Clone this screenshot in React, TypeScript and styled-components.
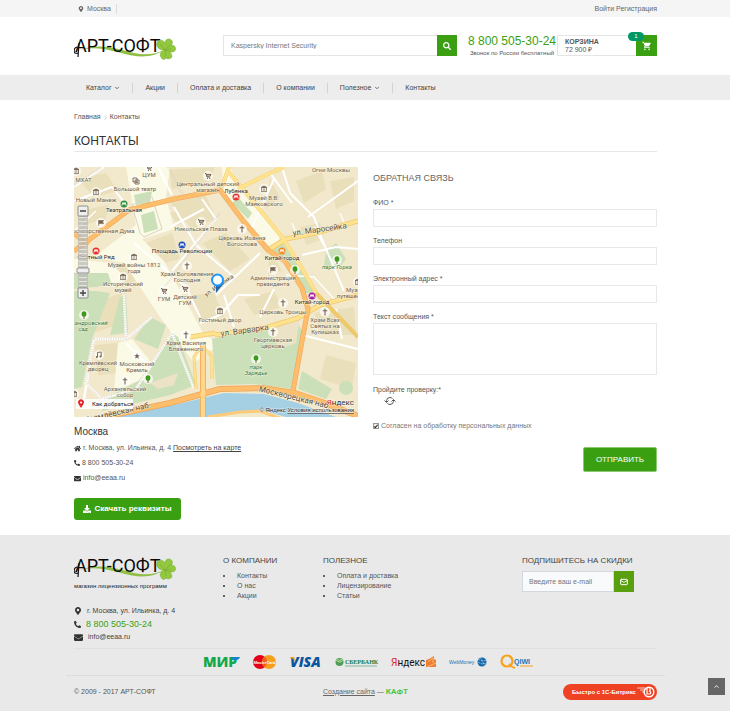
import React from "react";
import styled, { createGlobalStyle, css } from "styled-components";
import {
  FaDownload,
  FaEnvelope,
  FaHome,
  FaMapMarkerAlt,
  FaPhoneAlt,
  FaSearch,
} from "react-icons/fa";
import { MdShoppingCart } from "react-icons/md";
import { ChevronDown, ChevronRight, ChevronUp, Mail } from "lucide-react";

const GREEN = "#3aa012";

const Global = createGlobalStyle`
  *, *::before, *::after { box-sizing: border-box; }
  body {
    margin: 0;
    background: #fff;
    color: #555;
    font-family: "Liberation Sans", Arial, sans-serif;
    font-size: 7px;
    line-height: 10px;
  }
  a { color: inherit; text-decoration: none; }
  h1, h2, h3, p, ul { margin: 0; padding: 0; font-weight: 400; }
  button, input, textarea { font: inherit; color: inherit; border-radius: 0; }
  svg { display: block; flex: none; }
`;

const container = css`
  padding: 0 73px 0 74px;
`;

const TopBar = styled.div`
  ${container}
  display: flex;
  align-items: center;
  justify-content: space-between;
  height: 17px;
  background: #f5f5f5;
  color: #666;
`;

const City = styled.a`
  display: flex;
  align-items: center;
  gap: 3px;
  padding: 0 5px 0 4px;
  border-right: 1px solid #ddd;
`;

const AuthLinks = styled.div`
  display: flex;
  gap: 2px;
`;

const Header = styled.header`
  ${container}
  display: flex;
  align-items: flex-start;
  height: 58px;
  padding-top: 18px;
`;

const LogoLink = styled.a`
  flex: 0 0 149px;
  margin-top: -2px;
`;

const Search = styled.form`
  display: flex;
  flex: 1;
  height: 21px;
`;

const SearchInput = styled.input`
  flex: 1;
  min-width: 0;
  padding: 0 7px;
  border: 1px solid #e5e5e5;
  border-right: 0;
  background: #fff;
  outline: 0;
  &::placeholder { color: #777; opacity: 1; }
`;

const SquareButton = styled.button<{ $bg?: string }>`
  display: flex;
  flex: 0 0 20px;
  align-items: center;
  justify-content: center;
  padding: 0;
  border: 0;
  background: ${(p) => p.$bg || GREEN};
  color: #fff;
  cursor: pointer;
`;

const PhoneBlock = styled.div`
  flex: 0 0 90px;
  margin-left: 10px;
  text-align: center;
`;

const HeaderPhone = styled.a`
  display: block;
  color: ${GREEN};
  font-size: 12px;
  line-height: 13px;
  white-space: nowrap;
`;

const PhoneNote = styled.p`
  font-size: 6px;
  line-height: 10px;
  white-space: nowrap;
`;

const Cart = styled.div`
  position: relative;
  display: flex;
  flex: 0 0 100px;
  height: 21px;
  border: 1px solid #e5e5e5;
  border-right: 0;
`;

const CartInfo = styled.div`
  flex: 1;
  padding: 2px 7px;
  line-height: 8px;
`;

const CartButton = styled(SquareButton)`
  flex-basis: 21px;
  margin: -1px 0;
`;

const CartBadge = styled.span`
  position: absolute;
  top: -4px;
  right: 13px;
  width: 16px;
  height: 9px;
  border-radius: 5px;
  background: #009966;
  color: #fff;
  font-size: 6px;
  line-height: 9px;
  text-align: center;
`;

const Nav = styled.nav`
  ${container}
  display: flex;
  align-items: center;
  height: 25px;
  background: #ededed;
  color: #444;
`;

const NavLink = styled.a`
  display: flex;
  align-items: center;
  gap: 3px;
  padding: 0 12px;
  border-right: 1px solid #d2d2d2;
  &:last-child { border: 0; }
`;

const Main = styled.main`
  ${container}
  padding-top: 12px;
  padding-bottom: 15px;
`;

const Crumbs = styled.nav`
  display: flex;
  align-items: center;
  gap: 1px;
`;

const Title = styled.h1`
  margin-top: 11px;
  padding-bottom: 2px;
  border-bottom: 1px solid #e8e8e8;
  color: #333;
  font-size: 12px;
  line-height: 16px;
`;

const Columns = styled.div`
  display: grid;
  grid-template-columns: 1fr 1fr;
  gap: 15px;
  margin-top: 15px;
`;

const MapSvg = styled.svg`
  width: 100%;
  height: auto;
  font-family: Roboto, sans-serif;
`;

const Office = styled.h2`
  margin-top: 8px;
  color: #333;
  font-size: 10px;
  line-height: 13px;
`;

const ContactLine = styled.p`
  display: flex;
  align-items: center;
  gap: 2px;
  margin-top: 5px;
  svg { color: #333; }
`;

const MapLink = styled.a`
  color: #444;
  text-decoration: underline;
`;

const Download = styled.a`
  display: inline-flex;
  align-items: center;
  justify-content: center;
  gap: 3px;
  width: 107px;
  height: 22px;
  margin-top: 15px;
  border-radius: 3px;
  background: ${GREEN};
  color: #fff;
  font-size: 8px;
  font-weight: 700;
`;

const Form = styled.form`
  padding-top: 5px;
`;

const FormTitle = styled.h2`
  margin-bottom: 14px;
  color: #666;
  font-size: 9px;
  line-height: 12px;
`;

const Field = styled.label`
  display: block;
  margin-bottom: 9px;
`;

const fieldBox = css`
  display: block;
  width: 100%;
  margin-top: 1px;
  padding: 0 4px;
  border: 1px solid #e8e8e8;
  background: #fff;
  outline: 0;
`;

const TextInput = styled.input`
  ${fieldBox}
  height: 18px;
`;

const TextArea = styled.textarea`
  ${fieldBox}
  height: 52px;
  resize: none;
`;

const Captcha = styled.div`
  padding-top: 1px;
`;

const Refresh = styled.button`
  display: block;
  margin: 1px 0 0 11px;
  padding: 0;
  border: 0;
  background: none;
  cursor: pointer;
`;

const Consent = styled.label`
  display: flex;
  align-items: center;
  gap: 2px;
  margin-top: 15px;
  color: #777;
`;

const Check = styled.input`
  appearance: none;
  display: grid;
  place-items: center;
  width: 6px;
  height: 6px;
  margin: 0;
  border: 1px solid #999;
  background: #eee;
  &:checked::after {
    content: "";
    width: 2px;
    height: 4px;
    border: solid #222;
    border-width: 0 1px 1px 0;
    transform: rotate(40deg);
  }
`;

const Submit = styled.button`
  display: block;
  width: 74px;
  height: 25px;
  margin: 16px 0 0 auto;
  padding: 0;
  border: 1px solid #8bc974;
  border-radius: 2px;
  background: ${GREEN};
  color: #fff;
  font-size: 8px;
  cursor: pointer;
`;

const Footer = styled.footer`
  ${container}
  padding-top: 18px;
  padding-bottom: 4px;
  background: #e9e9e9;
`;

const FooterGrid = styled.div`
  display: grid;
  grid-template-columns: 149px 100px 1fr 135px;
  min-height: 95px;
`;

const Slogan = styled.p`
  color: #222;
  font-size: 6px;
  line-height: 10px;
  white-space: nowrap;
`;

const FooterContacts = styled.div`
  display: grid;
  gap: 3px;
  margin-top: 15px;
  svg { color: #333; }
`;

const FooterContact = styled.a<{ $accent?: boolean }>`
  display: flex;
  align-items: center;
  gap: 5px;
  height: 10px;
  color: ${(p) => (p.$accent ? GREEN : "#444")};
  font-size: ${(p) => (p.$accent ? "9px" : "7px")};
`;

const FooterTitle = styled.h3`
  padding-top: 3px;
  margin-bottom: 5px;
  color: #444;
  font-size: 8px;
  line-height: 10px;
  white-space: nowrap;
`;

const FooterList = styled.ul`
  padding-left: 14px;
  color: #555;
  list-style: none;
  li { position: relative; }
  li::before {
    content: "";
    position: absolute;
    left: -14px;
    top: 4px;
    width: 2px;
    height: 2px;
    border-radius: 1px;
    background: #333;
  }
`;

const Subscribe = styled.form`
  display: flex;
  width: 112px;
  height: 21px;
  ${SearchInput} {
    padding: 0 6px;
    border: 1px solid #d2d8de;
    background: #f9fafb;
  }
`;

const Payments = styled.div`
  display: flex;
  align-items: center;
  justify-content: center;
  gap: 13px;
  height: 27px;
  padding-left: 6px;
  border-top: 1px solid #e0e0e0;
`;

const Bottom = styled.div`
  display: grid;
  grid-template-columns: 249px 1fr auto;
  align-items: center;
  height: 32px;
  margin: 0 -8px;
  padding: 0 8px;
  border-top: 1px solid #dcdcdc;
`;

const Studio = styled.p`
  display: flex;
  align-items: center;
  gap: 2px;
  color: #666;
  a { text-decoration: underline; }
  strong { color: #49c741; font-family: Roboto, sans-serif; font-size: 8px; }
`;

const Bitrix = styled.a`
  display: flex;
  align-items: center;
  justify-content: space-between;
  width: 94px;
  height: 16px;
  padding: 0 2px 0 9px;
  border-radius: 8px;
  background: #ee4223;
  color: #fff;
  font-size: 6px;
  font-weight: 700;
`;

const ToTop = styled.button`
  position: fixed;
  right: 5px;
  bottom: 16px;
  display: flex;
  align-items: center;
  justify-content: center;
  width: 17px;
  height: 17px;
  padding: 0;
  border: 0;
  background: #666;
  color: #fff;
  cursor: pointer;
`;

function Logo() {
  return (
    <svg width="103" height="28" viewBox="0 0 103 28" role="img" aria-label="АРТ-СОФТ">
      <path d="M6 17C28 9 46 17 60 20Q78 24 92 16Q78 26 58 22.500C40 19 25 12 6 17Z" fill="#8fbf45" />
      <text x="1" y="19" fontFamily="Roboto, sans-serif" fontSize="18" fill="#0a0a0a">
        АРТ-СОФТ
      </text>
      <path d="M3 14C-1 15 -1 22 4 20M5 10L4 24" fill="none" stroke="#111" strokeWidth="1.200" />
      <g fill="#92c83e" stroke="#6aa62c" strokeWidth="0.500">
        <path d="M91 17C83 18 81 10 84 8C87 6 90 8 91 10C91 5 97 5 98 8C99 10 98 11 97 12C103 12 103 19 98 19C95 20 93 18 91 17Z" />
        <path d="M91 17C87 18 85 21 87 24C88 27 91 27 92 25C95 27 98 25 98 23C97 19 94 18 91 17Z" />
      </g>
      <path d="M86 11Q89 15 91 17L97 11M91 17L97 16M91 17L92 23" fill="none" stroke="#6f9f38" strokeWidth="0.500" />
    </svg>
  );
}

type IconKind = "museum" | "cross" | "tree" | "cart" | "metro" | "flag" | "star" | "note" | "mask";

function MapIcon({ kind, x, y, color }: { kind: IconKind; x: number; y: number; color?: string }) {
  const brown = "#76634f";
  return (
    <g transform={`translate(${x} ${y})`}>
      {kind !== "metro" && <circle r="5" fill="#fff" opacity="0.7" />}
      {kind === "museum" && <path d="M-3-1.5L0-3L3-1.5ZM-2.3-1V2M0-1V2M2.3-1V2M-3 2.6H3" fill={brown} stroke={brown} strokeWidth="0.8" />}
      {kind === "cross" && <path d="M0-3.5V3.5M-2.3-1.2H2.3" stroke={brown} strokeWidth="1.1" />}
      {kind === "tree" && (
        <>
          <path d="M0 0V4" stroke="#6b5b34" strokeWidth="0.9" />
          <ellipse cy="-1" rx="2.4" ry="2.8" fill="#3f9a1c" />
        </>
      )}
      {kind === "cart" && (
        <>
          <path d="M-3-2.5H-2L-1 1H2.2M-1.8-1.6H3L2.2 0H-1.2" fill="none" stroke={brown} strokeWidth="1" />
          <circle cx="-0.6" cy="2.4" r="0.6" fill={brown} />
          <circle cx="1.8" cy="2.4" r="0.6" fill={brown} />
        </>
      )}
      {kind === "flag" && <path d="M-2.4 3V-2.5H2.6L1.6-1L2.6 0.6H-2.2" fill={brown} stroke={brown} strokeWidth="0.6" />}
      {kind === "star" && <path d="M0-3L0.8-0.8H3L1.2 0.5L1.9 2.7L0 1.4L-1.9 2.7L-1.2 0.5L-3-0.8H-0.8Z" fill={brown} />}
      {kind === "note" && (
        <>
          <path d="M-1.5 2V-2.5L2.2-3V1.5" fill="none" stroke={brown} strokeWidth="0.9" />
          <circle cx="-2.2" cy="2" r="1" fill={brown} />
          <circle cx="1.5" cy="1.6" r="1" fill={brown} />
        </>
      )}
      {kind === "mask" && <path d="M-3-3H1V1H-3ZM-1-1H3V3H-1ZM0 1.4H2" fill="none" stroke={brown} strokeWidth="0.9" />}
      {kind === "metro" && (
        <>
          <circle r="3.500" fill={color} />
          <path d="M-2.2 1.6L-1-1.6L0 0.6L1-1.6L2.2 1.6" fill="none" stroke="#fff" strokeWidth="0.9" />
        </>
      )}
    </g>
  );
}

const mapIcons: { kind: IconKind; x: number; y: number; color?: string }[] = [
  { kind: "cart", x: 75, y: 1 },
  { kind: "mask", x: 62, y: 14 },
  { kind: "museum", x: 2, y: 4 },
  { kind: "museum", x: 22, y: 25 },
  { kind: "cart", x: 134, y: 9 },
  { kind: "museum", x: 190, y: 22 },
  { kind: "flag", x: 27, y: 56 },
  { kind: "cart", x: 127, y: 55 },
  { kind: "cross", x: 168, y: 62 },
  { kind: "museum", x: 60, y: 90 },
  { kind: "museum", x: 49, y: 110 },
  { kind: "cross", x: 113, y: 99 },
  { kind: "cart", x: 90, y: 124 },
  { kind: "cart", x: 111, y: 122 },
  { kind: "flag", x: 199, y: 103 },
  { kind: "tree", x: 221, y: 103 },
  { kind: "tree", x: 263, y: 93 },
  { kind: "museum", x: 284, y: 115 },
  { kind: "museum", x: 146, y: 144 },
  { kind: "cross", x: 209, y: 136 },
  { kind: "cross", x: 251, y: 145 },
  { kind: "cross", x: 112, y: 168 },
  { kind: "cross", x: 199, y: 165 },
  { kind: "tree", x: 182, y: 192 },
  { kind: "tree", x: 10, y: 148 },
  { kind: "tree", x: 74, y: 212 },
  { kind: "note", x: 25, y: 188 },
  { kind: "star", x: 63, y: 189 },
  { kind: "cross", x: 51, y: 214 },
  { kind: "museum", x: 0, y: 227 },
  { kind: "metro", x: 50, y: 37, color: "#2f8f3e" },
  { kind: "metro", x: 22, y: 84, color: "#e5322d" },
  { kind: "metro", x: 108, y: 78, color: "#1b4fbd" },
  { kind: "metro", x: 162, y: 30, color: "#e5322d" },
  { kind: "metro", x: 208, y: 84, color: "#f58a1f" },
  { kind: "metro", x: 238, y: 129, color: "#a620a6" },
];

type LabelTone = "place" | "station" | "park";

const mapLabels: { x: number; y: number; lines: string[]; tone?: LabelTone }[] = [
  { x: 7, y: 15, lines: ["й МХАТ"] },
  { x: 75, y: 10, lines: ["ЦУМ"] },
  { x: 61, y: 24, lines: ["Большой театр"] },
  { x: 22, y: 35, lines: ["Новый Манеж"] },
  { x: 134, y: 19, lines: ["Центральный детский", "магазин"] },
  { x: 162, y: 26, lines: ["Лубянка"], tone: "station" },
  { x: 190, y: 33, lines: ["Музей В.В.", "Маяковского"] },
  { x: 257, y: 5, lines: ["Огни Москвы"] },
  { x: 50, y: 45, lines: ["Театральная"], tone: "station" },
  { x: 28, y: 66, lines: ["Государственная Дума"] },
  { x: 127, y: 64, lines: ["Никольская Плаза"] },
  { x: 168, y: 73, lines: ["Церковь Иоанна", "Богослова"] },
  { x: 22, y: 92, lines: ["Охотный Ряд"], tone: "station" },
  { x: 108, y: 86, lines: ["Площадь Революции"], tone: "station" },
  { x: 60, y: 100, lines: ["Музей войны 1812", "года"] },
  { x: 49, y: 119, lines: ["Исторический", "музей"] },
  { x: 113, y: 109, lines: ["Храм Богоявления", "Господня"] },
  { x: 90, y: 134, lines: ["ГУМ"] },
  { x: 111, y: 132, lines: ["Детский", "ГУМ"] },
  { x: 208, y: 93, lines: ["Китай-город"], tone: "station" },
  { x: 199, y: 113, lines: ["Администрация", "президента"] },
  { x: 263, y: 102, lines: ["парк Горка"], tone: "park" },
  { x: 281, y: 125, lines: ["Музей", "путешествий"] },
  { x: 238, y: 137, lines: ["Китай-город"], tone: "station" },
  { x: 146, y: 155, lines: ["Гостиный двор"] },
  { x: 209, y: 147, lines: ["Церковь Троицы"] },
  { x: 251, y: 155, lines: ["Храм Всех", "Святых на", "Кулишках"] },
  { x: 112, y: 178, lines: ["Храм Василия", "Блаженного"] },
  { x: 199, y: 175, lines: ["Георгиевская", "церковь"] },
  { x: 182, y: 202, lines: ["парк", "Зарядье"], tone: "park" },
  { x: 24, y: 198, lines: ["Кремлёвский", "дворец"] },
  { x: 63, y: 199, lines: ["Московский", "Кремль"] },
  { x: 51, y: 224, lines: ["Архангельский", "собор"] },
  { x: 9, y: 158, lines: ["Александровский", "сад"], tone: "park" },
];

const toneColor: Record<LabelTone, string> = {
  place: "#6f6352",
  station: "#2d2d2d",
  park: "#2f7a3d",
};

function CityMap() {
  return (
    <MapSvg viewBox="0 0 284 250" role="img" aria-label="Карта проезда">
      <rect width="284" height="250" fill="#f2e9cd" />
      <g fill="#e9dfbb">
        <path d="M62 0H84V12H62ZM95 3L140 0L138 14L98 22ZM96 36L132 28L142 52L118 62ZM170 24L180 48L170 52L156 32ZM196 12L206 30L192 42ZM222 14L248 4L252 22L230 36ZM226 60L246 56L250 72L232 78ZM4 12L32 6L44 24L20 30ZM6 44L34 38L32 52L10 58ZM72 76L98 66L106 92L82 98ZM128 76L152 66L176 92L156 104ZM30 100L70 92L78 110L46 118ZM116 128L140 126L150 150L126 154ZM170 132L200 124L208 140L180 148ZM240 146L280 140L282 168L248 168ZM252 188L282 196L278 222L246 212ZM20 178L44 176L48 206L24 208ZM256 14L280 10V34L262 42ZM18 136L48 126L44 158L18 166ZM196 84L208 104L194 108ZM96 46L110 42L116 52L104 58Z" />
      </g>
      <g fill="#fbfae6">
        <path d="M52 0H96L92 30L100 62L68 72L90 94L128 164L144 178L120 196L86 150L50 96L20 90L62 58Z" />
        <path d="M148 0H156L168 24L208 66L200 82L196 80L150 26Z" />
        <path d="M0 92L38 96L50 110L46 120L0 118Z" />
        <path d="M44 176L58 172L78 196L64 214L40 224Z" />
      </g>
      <g fill="#cbdfb8">
        <path d="M0 124H22L36 126L18 172L8 220L0 222Z" />
        <path d="M46 130L52 128L54 166L36 168ZM76 150L92 158L84 182L60 172Z" />
        <path d="M98 166L104 170L122 218L96 228L28 244L30 232L72 210Z" />
        <path d="M138 172L184 162L222 152L230 168L220 222L180 217L142 218Z" />
        <path d="M67 48L80 44L84 62L70 66ZM60 28L78 24L76 36L62 38ZM164 30L178 46L174 52L158 36Z" />
        <path d="M198 84L208 74L242 126H232L214 96ZM252 84L262 76L272 92L266 100H250Z" />
        <path d="M228 204L258 222L252 232L224 222ZM0 106L34 106L38 118L0 122Z" />
        <circle cx="272" cy="221" r="7" />
      </g>
      <path d="M76 216L104 206L100 218L84 222ZM194 162L226 150L222 176L206 182Z" fill="#ece3c6" />
      <path d="M32 250L100 238L150 226L190 227L224 236L262 250Z" fill="#a5cfe2" />
      <path d="M134 250L160 245L186 243L212 250Z" fill="#f1e9cb" />
      <g fill="none" stroke="#fff" strokeLinejoin="round" strokeWidth="2">
        <path d="M208 0L216 26L240 50L252 82L270 124M196 6L218 36M178 60L200 12M234 50L284 14" />
        <path d="M228 88L262 80L284 82M240 60L250 78M142 128L186 86M98 104L142 52L128 32M100 40L122 78L160 110" />
        <path d="M0 34L38 20L54 40M0 20L30 0M84 0L98 28M96 60L130 42M60 76L112 120L126 150" />
        <path d="M126 156L146 148L164 128L186 128M186 150L200 122M228 168L284 182M262 142L268 172M150 128L160 160" />
        <path d="M212 108L240 110L262 134M218 56L222 66M266 46L272 60M0 64L22 44" strokeWidth="1.300" />
      </g>
      <g fill="none" stroke="#fff" strokeWidth="2.400">
        <path d="M20 172H52L50 128M52 176L76 200M52 172L78 150M20 172L12 216L28 232L62 222L98 166L120 222M10 232L14 208" />
      </g>
      <g fill="none" stroke="#d4cec6" strokeWidth="2.400" strokeDasharray="1 1.4">
        <path d="M20 172H52L50 128M52 172L78 150M20 172L12 216L28 232L62 222L98 166L120 222" opacity="0.650" />
        <path d="M0 18L28 0M146 46L86 126M0 106L24 120M94 0L110 30" opacity="0.650" />
      </g>
      <path d="M66 66L58 38L78 30L88 62L70 70Z" fill="none" stroke="#d9d4c7" />
      <g fill="none" strokeLinejoin="round">
        <g stroke="#eec96c" strokeWidth="5">
          <path d="M155 0L148 20M164 22L192 8L210 0M154 4L172 26L208 70L226 98L242 126L284 170" strokeWidth="4" />
          <path d="M194 83L212 72L242 66L284 54M141 168L191 161L224 151L246 138L284 128M116 170L141 166" />
          <path d="M122 222L120 190Q128 174 138 190L138 212" strokeWidth="3" />
        </g>
        <g stroke="#ffe28e" strokeWidth="3.500">
          <path d="M155 0L148 20M164 22L192 8L210 0M154 4L172 26L208 70L226 98L242 126" />
          <path d="M194 83L212 72L242 66L284 54M141 168L191 161L224 151L246 138L284 128M116 170L141 166" />
          <path d="M122 222L120 190Q128 174 138 190L138 212" strokeWidth="2" />
        </g>
        <g stroke="#eda55a" strokeWidth="6">
          <path d="M0 84L55 43L100 32L146 23L170 55L194 83L211 94L228 121L234 142L228 174L219 224M0 66L14 78" strokeWidth="5" />
          <path d="M30 250L96 236L146 222L188 221L221 226L248 235L284 249" />
          <path d="M129 178V250" />
        </g>
        <g stroke="#fdbd6b" strokeWidth="4.500">
          <path d="M0 84L55 43L100 32L146 23L170 55L194 83L211 94L228 121L234 142L228 174L219 224M0 66L14 78" strokeWidth="4" />
          <path d="M30 250L96 236L146 222L188 221L221 226L248 235L284 249" />
          <path d="M129 178V250" stroke="#ffd68a" />
        </g>
        <path d="M134 250L166 245L186 244L208 252" stroke="#fdcb7a" strokeWidth="3" />
      </g>
      {mapIcons.map((icon, i) => (
        <MapIcon key={i} {...icon} />
      ))}
      <g textAnchor="middle" fontSize="6" stroke="#fbf7e4" strokeWidth="1" strokeOpacity="0.800" paintOrder="stroke">
        {mapLabels.map(({ x, y, lines, tone = "place" }) => (
          <text key={lines[0] + x} fill={toneColor[tone]} fontStyle={tone === "park" ? "italic" : undefined}>
            {lines.map((line, i) => (
              <tspan key={line} x={x} y={y + i * 6}>
                {line}
              </tspan>
            ))}
          </text>
        ))}
        <g fill="#544d42" fontSize="8">
          <text transform="translate(246 65) rotate(-8)">ул. Маросейка</text>
          <text transform="translate(171 166) rotate(-8)">ул. Варварка</text>
          <text transform="translate(220 233) rotate(14)">Москворецкая наб.</text>
          <text transform="translate(44 248) rotate(-13)">Кремлёвская наб.</text>
          <text transform="translate(146 120) rotate(-35)" fontSize="6">ул. Ильинка</text>
        </g>
      </g>
      <path d="M142 118L150 116L142 126Z" fill="#2466a8" />
      <circle cx="143.500" cy="113" r="5.500" fill="#fff" stroke="#1e98ff" strokeWidth="2" />
      <rect x="4" y="44" width="10" height="84" fill="#b9b9b4" opacity="0.750" />
      <path d="M9 50V121" stroke="#f4f4f4" strokeWidth="8" strokeDasharray="1 3" opacity="0.700" />
      <g fill="#eee" stroke="#777" strokeWidth="0.800">
        <rect x="4" y="39" width="10" height="10" rx="1" />
        <rect x="4" y="121" width="10" height="10" rx="1" />
        <rect x="3" y="101" width="12" height="5" rx="1" />
      </g>
      <path d="M6 44H12M6 126H12M9 123V129" stroke="#444" strokeWidth="1.400" />
      <rect x="2" y="232" width="57" height="10" fill="#fff" opacity="0.900" />
      <path d="M7 241L4.500 237A3 3 0 1 1 9.500 237Z" fill="#e3262c" />
      <circle cx="7" cy="235.500" r="1" fill="#fff" />
      <text x="18" y="239" fontSize="6" fill="#222">Как добраться</text>
      <g stroke="#fff" strokeWidth="1" paintOrder="stroke" strokeOpacity="0.600">
        <text x="280" y="238" textAnchor="end" fontSize="8" fill="#333">
          <tspan fill="#e3262c">Я</tspan>ндекс
        </text>
        <text x="280" y="245" textAnchor="end" fontFamily="Liberation Sans, sans-serif" fontSize="6" fill="#222">
          © Яндекс{"  "}
          <tspan textDecoration="underline">Условия использования</tspan>
        </text>
      </g>
    </MapSvg>
  );
}

function PaymentLogos() {
  return (
    <Payments>
      <svg width="37" height="14" viewBox="0 0 37 14" role="img" aria-label="МИР">
        <text x="0" y="12" fontFamily="Open Sans, sans-serif" fontWeight="800" fontSize="14" fill="#12a84b">МИР</text>
        <path d="M28 2H37Q36 5 33 5H28Z" fill="#1285c9" />
      </svg>
      <svg width="23" height="14" viewBox="0 0 23 14" role="img" aria-label="MasterCard">
        <circle cx="7" cy="7" r="7" fill="#e3001b" />
        <circle cx="16" cy="7" r="7" fill="#f79e1b" />
        <path d="M11.500 1.600A7 7 0 0 1 11.500 12.400A7 7 0 0 1 11.500 1.600" fill="#f0601b" />
        <text x="11.500" y="9" textAnchor="middle" fontFamily="Liberation Sans, sans-serif" fontStyle="italic" fontWeight="700" fontSize="4" fill="#fff">MasterCard</text>
      </svg>
      <svg width="33" height="14" viewBox="0 0 33 14" role="img" aria-label="VISA">
        <text x="1" y="12" fontFamily="Open Sans, sans-serif" fontStyle="italic" fontWeight="800" fontSize="14" fill="#0a54a0">VISA</text>
        <path d="M0 2H4Q6 2 6 6Q4 3 0 2Z" fill="#f5a21d" />
      </svg>
      <svg width="43" height="10" viewBox="0 0 43 10" role="img" aria-label="Сбербанк">
        <circle cx="4.500" cy="5" r="4" fill="#4f9d55" />
        <path d="M1 3Q5 7 8 3M2 1.500Q5 5 7.500 1.500" fill="none" stroke="#cfe6b4" strokeWidth="0.900" />
        <text x="10" y="7" fontFamily="Liberation Serif, serif" fontWeight="700" fontSize="6" fill="#147a42">СБЕРБАНК</text>
        <path d="M10 9H42" stroke="#5fa37c" strokeWidth="0.700" />
      </svg>
      <svg width="45" height="14" viewBox="0 0 45 14" role="img" aria-label="Яндекс Деньги">
        <text x="0" y="11" fontFamily="Roboto, sans-serif" fontSize="10" fill="#111">
          <tspan fill="#e3262c">Я</tspan>ндекс
        </text>
        <path d="M35 5L38 4L43 1V4L45 5V12H35Z" fill="#ef7f2c" />
        <path d="M37 7L42 3V8M36 12L45 8" fill="none" stroke="#ffc28f" strokeWidth="0.800" />
      </svg>
      <svg width="38" height="12" viewBox="0 0 38 12" role="img" aria-label="WebMoney">
        <text x="0" y="8" fontFamily="Liberation Sans, sans-serif" fontSize="5" fill="#1673b1">WebMoney</text>
        <circle cx="33" cy="6" r="4.500" fill="#1768a9" />
        <path d="M29 3Q34 6 38 4M29 6Q33 9 38 7M31 1L36 10" fill="none" stroke="#a9d1ec" strokeWidth="0.800" strokeDasharray="2 1" />
      </svg>
      <svg width="34" height="16" viewBox="0 0 34 16" role="img" aria-label="QIWI">
        <circle cx="7" cy="7" r="5.500" fill="none" stroke="#f7a21b" strokeWidth="2.200" />
        <path d="M9 10Q11 13 15 14" fill="none" stroke="#f7a21b" strokeWidth="2" />
        <text x="14" y="10" fontFamily="Liberation Sans, sans-serif" fontWeight="700" fontSize="7" fill="#1b78b8">QIWI</text>
        <path d="M20 12H33" stroke="#f7a21b" />
      </svg>
    </Payments>
  );
}

const navItems: { label: string; menu?: boolean }[] = [
  { label: "Каталог", menu: true },
  { label: "Акции" },
  { label: "Оплата и доставка" },
  { label: "О компании" },
  { label: "Полезное", menu: true },
  { label: "Контакты" },
];

const footerColumns = [
  { title: "О КОМПАНИИ", items: ["Контакты", "О нас", "Акции"] },
  { title: "ПОЛЕЗНОЕ", items: ["Оплата и доставка", "Лицензирование", "Статьи"] },
];

const fields = [
  { label: "ФИО *", type: "text" },
  { label: "Телефон", type: "tel" },
  { label: "Электронный адрес *", type: "email" },
];

export default function App() {
  return (
    <>
      <Global />
      <TopBar>
        <City href="#">
          <FaMapMarkerAlt size={6} />
          Москва
        </City>
        <AuthLinks>
          <a href="#">Войти</a>
          <a href="#">Регистрация</a>
        </AuthLinks>
      </TopBar>

      <Header>
        <LogoLink href="#">
          <Logo />
        </LogoLink>
        <Search>
          <SearchInput type="search" aria-label="Поиск" placeholder="Kaspersky Internet Security" />
          <SquareButton type="button" aria-label="Найти">
            <FaSearch size={8} />
          </SquareButton>
        </Search>
        <PhoneBlock>
          <HeaderPhone href="tel:88005053024">8 800 505-30-24</HeaderPhone>
          <PhoneNote>Звонок по России бесплатный</PhoneNote>
        </PhoneBlock>
        <Cart>
          <CartInfo>
            <strong>КОРЗИНА</strong>
            <div>72 900 ₽</div>
          </CartInfo>
          <CartButton type="button" aria-label="Корзина">
            <MdShoppingCart size={10} />
          </CartButton>
          <CartBadge>1</CartBadge>
        </Cart>
      </Header>

      <Nav>
        {navItems.map((item) => (
          <NavLink key={item.label} href="#">
            {item.label}
            {item.menu && <ChevronDown size={6} strokeWidth={3} />}
          </NavLink>
        ))}
      </Nav>

      <Main>
        <Crumbs aria-label="Навигация">
          <a href="#">Главная</a>
          <ChevronRight size={7} color="#aaa" />
          <span>Контакты</span>
        </Crumbs>
        <Title>КОНТАКТЫ</Title>

        <Columns>
          <section>
            <CityMap />
            <Office>Москва</Office>
            <ContactLine>
              <FaHome size={7} />
              <span>
                г. Москва, ул. Ильинка, д. 4 <MapLink href="#">Посмотреть на карте</MapLink>
              </span>
            </ContactLine>
            <ContactLine>
              <FaPhoneAlt size={6} />
              <a href="tel:88005053024">8 800 505-30-24</a>
            </ContactLine>
            <ContactLine>
              <FaEnvelope size={7} />
              <a href="mailto:info@eeaa.ru">info@eeaa.ru</a>
            </ContactLine>
            <Download href="#">
              <FaDownload size={8} />
              Скачать реквизиты
            </Download>
          </section>

          <Form>
            <FormTitle>ОБРАТНАЯ СВЯЗЬ</FormTitle>
            {fields.map((f) => (
              <Field key={f.label}>
                {f.label}
                <TextInput type={f.type} />
              </Field>
            ))}
            <Field>
              Текст сообщения *
              <TextArea />
            </Field>
            <Captcha>
              <p>Пройдите проверку:*</p>
              <Refresh type="button" aria-label="Обновить проверку">
                <svg width="12" height="10" viewBox="0 0 12 10" fill="none" stroke="#555">
                  <path d="M2.500 6V4.500Q3 1.500 6 1.500Q7.500 1.500 8.500 2.500M9.500 4V5.500Q9 8.500 6 8.500Q4.500 8.500 3.500 7.500" />
                  <path d="M0.500 4.500L2.500 6.500L4.500 4.500M7.500 5.500L9.500 3.500L11.500 5.500" />
                </svg>
              </Refresh>
            </Captcha>
            <Consent>
              <Check type="checkbox" defaultChecked />
              Согласен на обработку персональных данных
            </Consent>
            <Submit type="button">ОТПРАВИТЬ</Submit>
          </Form>
        </Columns>
      </Main>

      <Footer>
        <FooterGrid>
          <div>
            <Logo />
            <Slogan>магазин лицензионных программ</Slogan>
            <FooterContacts>
              <FooterContact href="#">
                <FaMapMarkerAlt size={8} />
                г. Москва, ул. Ильинка, д. 4
              </FooterContact>
              <FooterContact href="tel:88005053024" $accent>
                <FaPhoneAlt size={7} />
                8 800 505-30-24
              </FooterContact>
              <FooterContact href="mailto:info@eeaa.ru">
                <FaEnvelope size={9} />
                info@eeaa.ru
              </FooterContact>
            </FooterContacts>
          </div>
          {footerColumns.map((col) => (
            <div key={col.title}>
              <FooterTitle>{col.title}</FooterTitle>
              <FooterList>
                {col.items.map((item) => (
                  <li key={item}>
                    <a href="#">{item}</a>
                  </li>
                ))}
              </FooterList>
            </div>
          ))}
          <div>
            <FooterTitle>ПОДПИШИТЕСЬ НА СКИДКИ</FooterTitle>
            <Subscribe>
              <SearchInput type="email" aria-label="Ваш e-mail" placeholder="Введите ваш e-mail" />
              <SquareButton type="button" aria-label="Подписаться" $bg="#5a9f0d">
                <Mail size={8} strokeWidth={3} />
              </SquareButton>
            </Subscribe>
          </div>
        </FooterGrid>
        <PaymentLogos />
        <Bottom>
          <span>© 2009 - 2017 АРТ-СОФТ</span>
          <Studio>
            <a href="#">Создание сайта</a> — <strong>КАФТ</strong>
          </Studio>
          <Bitrix href="#">
            Быстро с 1С-Битрикс
            <svg width="18" height="12" viewBox="0 0 18 12">
              <path d="M0 2H8M3 4H8M5 6H8" stroke="#fff" strokeWidth="0.700" />
              <circle cx="12" cy="6" r="4.800" fill="none" stroke="#fff" strokeWidth="1.400" />
              <path d="M10 2V8H13Q15 6 12 5M13 2V5" fill="none" stroke="#fff" strokeWidth="1.200" />
            </svg>
          </Bitrix>
        </Bottom>
      </Footer>
      <ToTop type="button" aria-label="Наверх">
        <ChevronUp size={7} strokeWidth={3} />
      </ToTop>
    </>
  );
}
